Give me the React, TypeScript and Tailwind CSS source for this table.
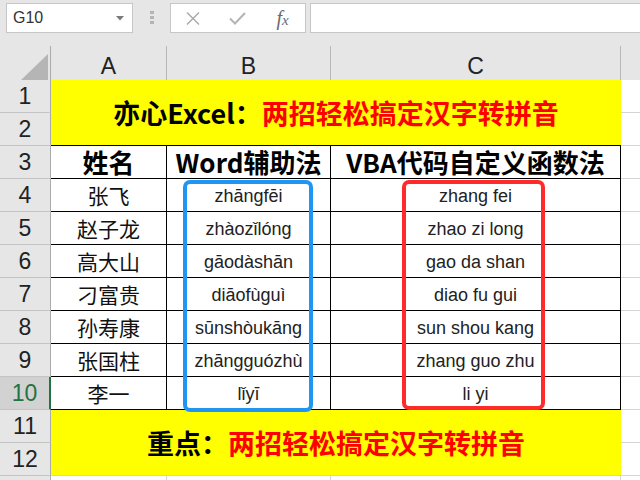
import React from "react";

const COLS = "grid grid-cols-[51px_116px_164px_290px_19px]";
const CJK = "font-['Noto_Sans_CJK_SC',sans-serif]";
const LAT = "font-['Liberation_Sans','Noto_Sans_CJK_SC',sans-serif]";

const names = ["张飞", "赵子龙", "高大山", "刁富贵", "孙寿康", "张国柱", "李一"];
const pyB = ["zhāngfēi", "zhàozǐlóng", "gāodàshān", "diāofùguì", "sūnshòukāng", "zhāngguózhù", "lǐyī"];
const pyC = ["zhang fei", "zhao zi long", "gao da shan", "diao fu gui", "sun shou kang", "zhang guo zhu", "li yi"];

function RH({ n, active }: { n?: number; active?: boolean }) {
  return active ? (
    <div className={`bg-[#d2d2d2] border-r-2 border-r-[#217346] border-b border-b-[#c4c4c4] flex items-center justify-center text-[23px] text-[#217346] ${LAT}`}>
      {n}
    </div>
  ) : (
    <div className={`bg-[#e6e6e6] border-r border-r-[#ababab] border-b border-b-[#c4c4c4] flex items-center justify-center text-[23px] text-[#222] ${LAT}`}>
      {n}
    </div>
  );
}

function D() {
  return <div className="bg-white border-b border-b-[#d4d4d4]" />;
}

export default function App() {
  return (
    <div className="w-[640px] h-[480px] overflow-hidden bg-white relative">
      {/* toolbar */}
      <div className="h-[46px] bg-[#e6e6e6] flex items-start pt-[3px]">
        <div className="ml-[6px] w-[127px] h-[30px] shrink-0 bg-white border border-[#c6c6c6] flex items-center justify-between pl-[6px] pr-[8px]">
          <span className={`text-[16px] text-[#333] ${LAT}`}>G10</span>
          <svg width="8" height="5" viewBox="0 0 8 5">
            <polygon points="0,0 8,0 4,4.5" fill="#7a7a7a" />
          </svg>
        </div>
        <div className="ml-[17px] mt-[8px] w-[4px] flex flex-col gap-[2px] shrink-0">
          <div className="h-[3px] bg-[#b4b4b4]" />
          <div className="h-[3px] bg-[#b4b4b4]" />
          <div className="h-[3px] bg-[#b4b4b4]" />
        </div>
        <div className="ml-[16px] w-[136px] h-[30px] shrink-0 bg-white border border-[#c6c6c6] grid grid-cols-3 items-center">
          <div className="flex justify-center">
            <svg width="14" height="13" viewBox="0 0 14 13">
              <path d="M1 0.5 L13 12.5 M13 0.5 L1 12.5" stroke="#a8a8a8" strokeWidth="1.4" fill="none" />
            </svg>
          </div>
          <div className="flex justify-center">
            <svg width="17" height="13" viewBox="0 0 17 13">
              <path d="M1 6.5 L6 11.5 L16 1" stroke="#b4b4b4" strokeWidth="2" fill="none" />
            </svg>
          </div>
          <div className="flex justify-center">
            <span className="italic font-['Liberation_Serif',serif] text-[20px] text-[#6a6a6a] leading-none">
              f<span className="text-[15px]">x</span>
            </span>
          </div>
        </div>
        <div className="ml-[4px] w-[340px] h-[30px] shrink-0 bg-white border border-[#c6c6c6]" />
      </div>

      {/* column header */}
      <div className={`${COLS} h-[34px] bg-[#e6e6e6]`}>
        <div className="border-r border-r-[#ababab] border-b border-b-[#ababab] flex items-end justify-end pr-[2px] pb-[4px]">
          <svg width="27" height="26" viewBox="0 0 27 26">
            <polygon points="27,0 27,26 0,26" fill="#b5b5b5" />
          </svg>
        </div>
        {["A", "B", "C"].map((c) => (
          <div
            key={c}
            className={`border-r border-r-[#b8b8b8] border-b border-b-[#ababab] flex items-center justify-center pt-[3px] text-[23px] text-[#222] ${LAT}`}
          >
            {c}
          </div>
        ))}
        <div className="border-b border-b-[#ababab]" />
      </div>

      {/* body */}
      <div className={`${COLS} grid-rows-[repeat(13,33px)]`}>
        <RH n={1} />
        <div className={`col-span-3 row-span-2 bg-[#ffff00] border-b border-b-black flex items-center justify-center text-[27px] font-bold leading-none ${CJK}`}>
          <span className="text-black">亦心Excel：</span>
          <span className="text-[#ff0000]">两招轻松搞定汉字转拼音</span>
        </div>
        <D />
        <RH n={2} />
        <D />

        <RH n={3} />
        <div className={`border-r border-r-black border-b border-b-black flex items-center justify-center text-[26px] font-bold text-black leading-none ${CJK}`}>
          姓名
        </div>
        <div className={`border-r border-r-black border-b border-b-black flex items-center justify-center text-[26px] font-bold text-black leading-none ${CJK}`}>
          Word辅助法
        </div>
        <div className={`border-r border-r-black border-b border-b-black flex items-center justify-center text-[26px] font-bold text-black leading-none ${CJK}`}>
          VBA代码自定义函数法
        </div>
        <D />

        {names.map((nm, i) => (
          <React.Fragment key={nm}>
            <RH n={i + 4} active={i === 6} />
            <div className={`border-r border-r-black border-b border-b-black flex items-center justify-center text-[21px] text-[#111] leading-none ${CJK}`}>
              {nm}
            </div>
            <div className={`border-r border-r-black border-b border-b-black flex items-center justify-center pt-[2px] text-[18px] text-[#222] leading-none ${LAT}`}>
              {pyB[i]}
            </div>
            <div className={`border-r border-r-black border-b border-b-black flex items-center justify-center pt-[2px] text-[18px] text-[#222] leading-none ${LAT}`}>
              {pyC[i]}
            </div>
            <D />
          </React.Fragment>
        ))}

        <RH n={11} />
        <div className={`col-span-3 row-span-2 bg-[#ffff00] border-b border-b-[#d4d4d4] flex items-center justify-center text-[27px] font-bold leading-none ${CJK}`}>
          <span className="text-black">重点：</span>
          <span className="text-[#ff0000]">两招轻松搞定汉字转拼音</span>
        </div>
        <D />
        <RH n={12} />
        <D />

        <RH />
        <div className="border-r border-r-[#d4d4d4] border-b border-b-[#d4d4d4]" />
        <div className="border-r border-r-[#d4d4d4] border-b border-b-[#d4d4d4]" />
        <div className="border-r border-r-[#d4d4d4] border-b border-b-[#d4d4d4]" />
        <D />
      </div>

      {/* highlight boxes */}
      <div className="absolute left-[183px] top-[180px] w-[130px] h-[232px] border-4 border-[#1f96f3] rounded-[7px]" />
      <div className="absolute left-[402px] top-[180px] w-[143px] h-[230px] border-4 border-[#ff2a2a] rounded-[7px]" />
    </div>
  );
}
